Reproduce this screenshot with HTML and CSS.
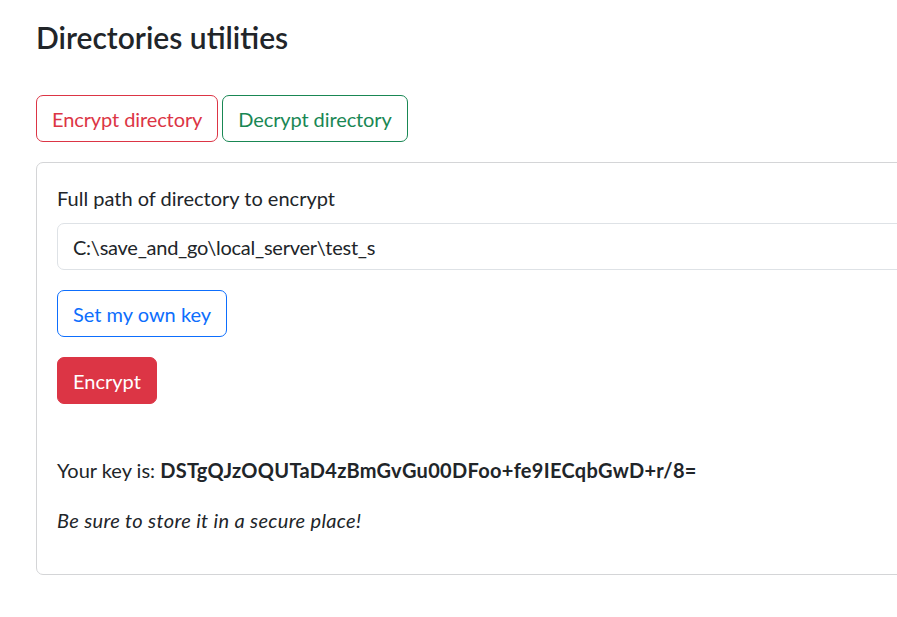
FILE: index.html
```html
<!DOCTYPE html>
<html lang="en">
<head>
<meta charset="utf-8">
<title>Directories utilities</title>
<link rel="stylesheet" href="styles.css">
</head>
<body>
<div class="container">
  <h4 class="title">Directories utilities</h4>
  <div class="tabs">
    <button class="btn btn-outline-danger">Encrypt directory</button>
    <button class="btn btn-outline-success">Decrypt directory</button>
  </div>
  <div class="card">
    <div class="card-body">
      <label class="form-label" for="path">Full path of directory to encrypt</label>
      <input class="form-control" id="path" type="text" value="C:\save_and_go\local_server\test_s">
      <div class="actions">
        <button class="btn btn-outline-primary">Set my own key</button>
        <button class="btn btn-danger">Encrypt</button>
      </div>
      <p class="key-line">Your key is: <strong>DSTgQJzOQUTaD4zBmGvGu00DFoo+fe9IECqbGwD+r/8=</strong></p>
      <p class="note"><em>Be sure to store it in a secure place!</em></p>
    </div>
  </div>
</div>
</body>
</html>
```
FILE: styles.css
```css
html, body {
  margin: 0;
  padding: 0;
  overflow: hidden;
  background: #fff;
}
body {
  font-family: Lato, "Noto Sans", sans-serif;
  font-size: 20px;
  line-height: 1.5;
  color: #212529;
}
.container {
  padding: 19px 0 0 36px;
  width: 1100px;
}
.title {
  margin: 0 0 40px;
  font-size: 30px;
  font-weight: 600;
  line-height: 1.2;
}
.tabs {
  display: flex;
  gap: 4px;
  margin-bottom: 20px;
}
.btn {
  font-family: inherit;
  font-size: 20px;
  line-height: 1.5;
  padding: 7.5px 15px;
  border-radius: 7px;
  border: 1px solid transparent;
  background: #fff;
  cursor: pointer;
}
.tabs .btn {
  letter-spacing: -0.1px;
}
.btn-outline-danger { color: #dc3545; border-color: #dc3545; }
.btn-outline-success { color: #198754; border-color: #198754; }
.btn-outline-primary { color: #0d6efd; border-color: #0d6efd; }
.btn-danger { color: #fff; background: #dc3545; border-color: #dc3545; }
.card {
  border: 1px solid #d4d5d7;
  border-radius: 7px;
}
.card-body {
  padding: 20px 20px 19px;
}
.form-label {
  display: block;
  margin-bottom: 10px;
}
.form-control {
  display: block;
  box-sizing: border-box;
  width: 100%;
  font-family: inherit;
  font-size: 20px;
  line-height: 1.5;
  color: #212529;
  letter-spacing: -0.25px;
  padding: 7.5px 15px;
  border: 1px solid #dee2e6;
  border-radius: 7px;
  background: #fff;
}
.actions {
  display: flex;
  flex-direction: column;
  align-items: flex-start;
  gap: 20px;
  margin-top: 20px;
}
.key-line {
  margin: 51px 0 20px;
}
.key-line strong {
  font-weight: 700;
  letter-spacing: 0.3px;
}
.note {
  margin: 0 0 20px;
  letter-spacing: 0.35px;
}
```
